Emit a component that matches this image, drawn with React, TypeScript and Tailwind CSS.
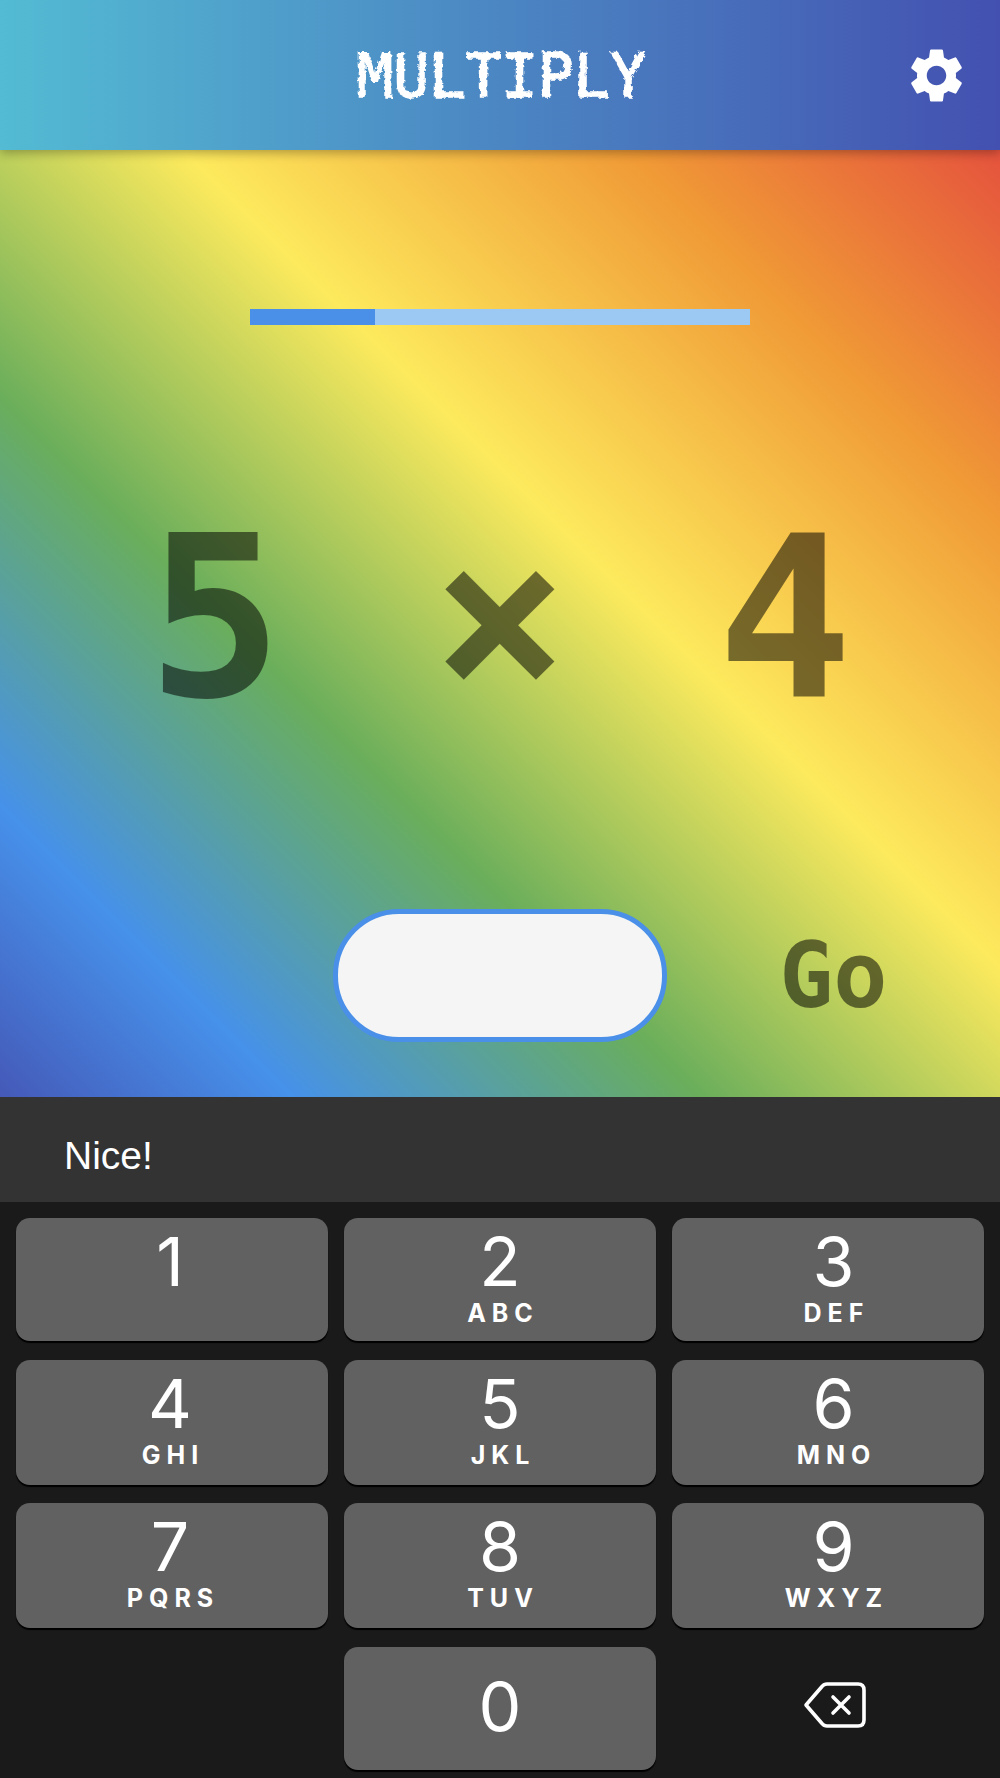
import { MdSettings } from 'react-icons/md'

const keys = [
  { digit: '1', letters: '', col: 'pr-[4px]' },
  { digit: '2', letters: 'ABC', col: '' },
  { digit: '3', letters: 'DEF', col: 'pl-[11px]' },
  { digit: '4', letters: 'GHI', col: 'pr-[4px]' },
  { digit: '5', letters: 'JKL', col: '' },
  { digit: '6', letters: 'MNO', col: 'pl-[11px]' },
  { digit: '7', letters: 'PQRS', col: 'pr-[4px]' },
  { digit: '8', letters: 'TUV', col: '' },
  { digit: '9', letters: 'WXYZ', col: 'pl-[11px]' },
]

function Key({ digit, letters, col }: { digit: string; letters: string; col: string }) {
  return (
    <div className={`flex flex-col items-center rounded-[14px] bg-[#616161] pt-[7px] text-white shadow-[0_2px_1px_#000] font-['Inter',sans-serif] ${col}`}>
      <span className="text-[68px] leading-[72px] font-normal">{digit}</span>
      <span className="mt-[2px] pl-[6px] text-[25px] leading-[28px] font-bold tracking-[6px]">{letters}</span>
    </div>
  )
}

export default function App() {
  return (
    <div className="flex h-[1778px] w-[1000px] flex-col overflow-hidden bg-[#1a1a1a]">
      <svg className="absolute h-0 w-0">
        <filter id="chalk">
          <feTurbulence type="fractalNoise" baseFrequency="0.22" numOctaves="2" seed="4" />
          <feDisplacementMap in="SourceGraphic" scale="5" />
        </filter>
      </svg>

      {/* Header */}
      <header className="relative z-10 flex h-[150px] shrink-0 items-center bg-gradient-to-r from-[#53bbd3] to-[#4350b0] shadow-[0_3px_10px_rgba(0,0,0,0.3)]">
        <div className="flex-1" />
        <h1 className="mt-[2px] pl-[34px] text-[60px] leading-none font-normal text-white [-webkit-text-stroke:1.5px_white] [filter:url(#chalk)] font-['DejaVu_Sans_Mono',monospace]">
          MULTIPLY
        </h1>
        <div className="flex flex-1 justify-end pr-[31px]">
          <MdSettings className="text-white" size={65} />
        </div>
      </header>

      {/* Game */}
      <main className="flex h-[947px] shrink-0 flex-col items-center bg-[linear-gradient(45deg,#4559b8_0%,#4691ea_15%,#6aae5b_36%,#fdea5d_58%,#f09a36_81%,#e5533d_100%)] pt-[159px] font-['DejaVu_Sans_Mono',monospace] font-bold text-black/[.53]">
        <div className="h-[16px] w-[500px] bg-[#9cc8f4]">
          <div className="h-full w-1/4 bg-[#4a90e8]" />
        </div>
        <div className="mt-[133px] grid w-[855px] grid-cols-3 text-center text-[225px] leading-[320px]">
          <span>5</span>
          <span>×</span>
          <span>4</span>
        </div>
        <div className="mt-[131px] grid w-full grid-cols-3 items-center">
          <div />
          <div className="h-[133px] rounded-[66px] border-[5px] border-[#4a90e8] bg-[#f5f5f5]" />
          <span className="text-center text-[90px] leading-none">Go</span>
        </div>
      </main>

      {/* Toast */}
      <div className="flex h-[105px] shrink-0 items-center bg-[#333333] pt-[13px] pl-[64px] text-[39px] text-white font-['Liberation_Sans',sans-serif]">
        Nice!
      </div>

      {/* Keypad */}
      <div className="mt-4 grid grid-cols-3 grid-rows-[123px_125px_125px_123px] gap-x-4 gap-y-[18.67px] px-4">
        {keys.map((key) => (
          <Key key={key.digit} digit={key.digit} letters={key.letters} col={key.col} />
        ))}
        <div />
        <div className="flex items-center justify-center rounded-[14px] bg-[#616161] pb-[4px] text-white shadow-[0_2px_1px_#000] font-['Inter',sans-serif]">
          <span className="text-[68px] leading-none font-normal">0</span>
        </div>
        <div className="flex items-center justify-center pb-[6px] pl-[12px]">
          <svg width="63" height="46" viewBox="0 0 63 46" fill="none" stroke="white" strokeWidth="3.6" strokeLinejoin="round" strokeLinecap="round">
            <path d="M3 23 L19 4.5 Q21 2 24 2 H55 Q61 2 61 8 V38 Q61 44 55 44 H24 Q21 44 19 41.5 Z" />
            <path d="M30 15 L46 31 M46 15 L30 31" />
          </svg>
        </div>
      </div>
    </div>
  )
}
